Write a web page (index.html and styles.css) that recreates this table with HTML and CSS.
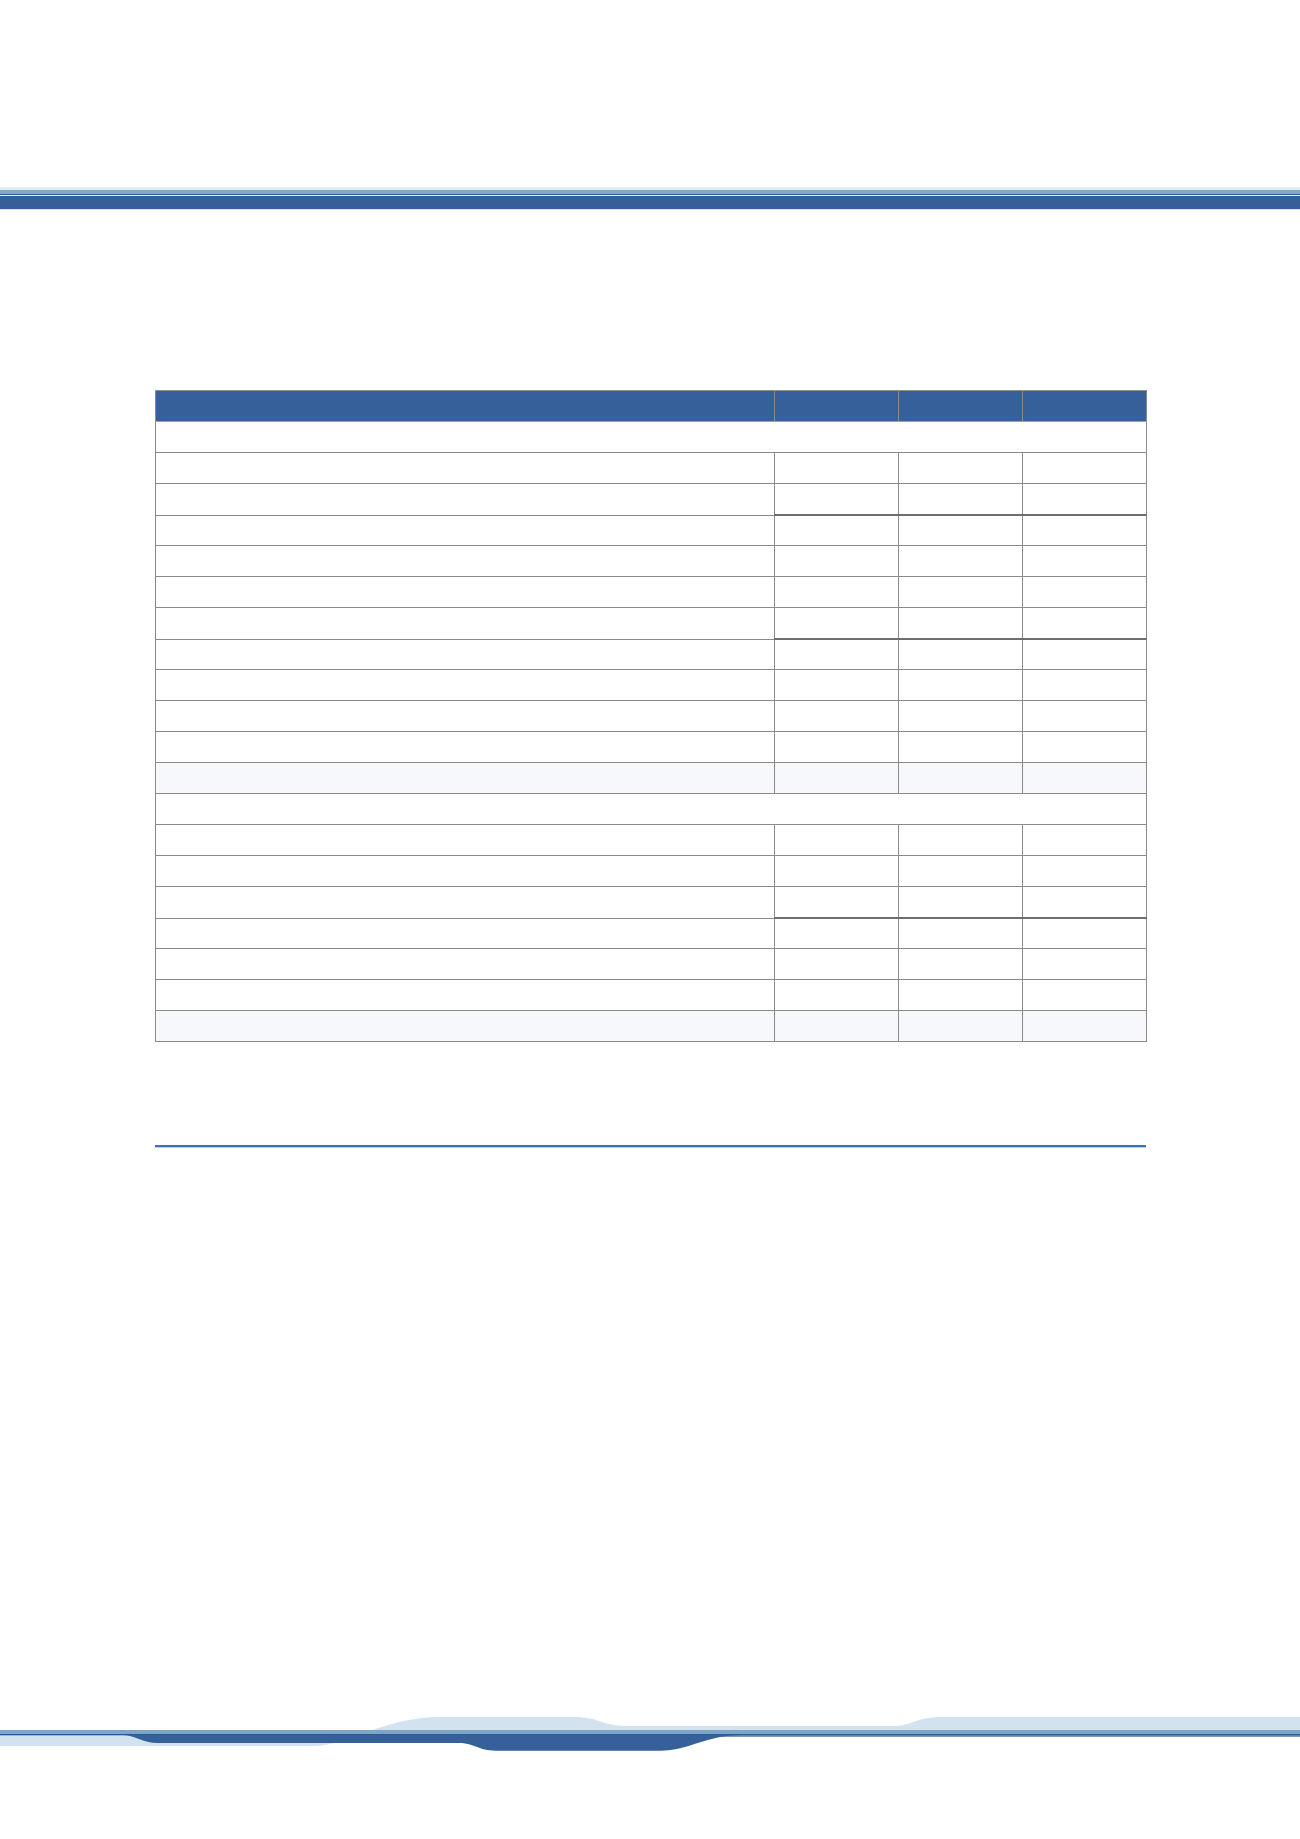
FILE: index.html
```html
<!DOCTYPE html>
<html lang="en">
<head>
<meta charset="utf-8">
<title>Report table</title>
<link rel="stylesheet" href="styles.css">
</head>
<body>
<div class="page">
  <header class="top-band">
    <div class="tb-light"></div>
    <div class="tb-mid"></div>
    <div class="tb-dark"></div>
    <div class="tb-gap"></div>
    <div class="tb-main"></div>
    <div class="tb-under"></div>
  </header>

  <main class="content">
    <table class="data">
      <colgroup>
        <col class="c-label"><col class="c-num"><col class="c-num"><col class="c-num">
      </colgroup>
      <thead>
        <tr><th></th><th class="num"></th><th class="num"></th><th class="num"></th></tr>
      </thead>
      <tbody>
        <tr class="section"><td colspan="4"></td></tr>
        <tr><td></td><td class="num"></td><td class="num"></td><td class="num"></td></tr>
        <tr><td></td><td class="num"></td><td class="num"></td><td class="num"></td></tr>
        <tr class="sep"><td></td><td class="num"></td><td class="num"></td><td class="num"></td></tr>
        <tr><td></td><td class="num"></td><td class="num"></td><td class="num"></td></tr>
        <tr><td></td><td class="num"></td><td class="num"></td><td class="num"></td></tr>
        <tr><td></td><td class="num"></td><td class="num"></td><td class="num"></td></tr>
        <tr class="sep"><td></td><td class="num"></td><td class="num"></td><td class="num"></td></tr>
        <tr><td></td><td class="num"></td><td class="num"></td><td class="num"></td></tr>
        <tr><td></td><td class="num"></td><td class="num"></td><td class="num"></td></tr>
        <tr><td></td><td class="num"></td><td class="num"></td><td class="num"></td></tr>
        <tr class="total"><td></td><td class="num"></td><td class="num"></td><td class="num"></td></tr>
        <tr class="section"><td colspan="4"></td></tr>
        <tr><td></td><td class="num"></td><td class="num"></td><td class="num"></td></tr>
        <tr><td></td><td class="num"></td><td class="num"></td><td class="num"></td></tr>
        <tr><td></td><td class="num"></td><td class="num"></td><td class="num"></td></tr>
        <tr class="sep"><td></td><td class="num"></td><td class="num"></td><td class="num"></td></tr>
        <tr><td></td><td class="num"></td><td class="num"></td><td class="num"></td></tr>
        <tr><td></td><td class="num"></td><td class="num"></td><td class="num"></td></tr>
        <tr class="total"><td></td><td class="num"></td><td class="num"></td><td class="num"></td></tr>
      </tbody>
    </table>

    <div class="rule"></div>
  </main>

  <footer class="bottom-band">
    <svg class="wave" width="1300" height="42" viewBox="0 0 1300 42" aria-hidden="true">
      <path fill="#d2e3ef" d="M0,17 L0,33 L315,33 C345,33 385,4 440,4 L575,4 C598,4 602,13 628,13 L893,13 C912,13 916,4 942,4 L1300,4 L1300,17 Z"/>
      <rect x="0" y="17" width="1300" height="4" fill="#7ca6c8"/>
      <rect x="0" y="21" width="1300" height="1.3" fill="#2b5a93"/>
      <rect x="600" y="22" width="700" height="1.8" fill="#5b83b5"/>
      <path fill="#35609a" d="M122,22 C135,22 142,30 158,30 L458,30 C475,30 478,37.7 496,37.7 L660,37.7 C690,37.7 705,22 742,22 Z"/>
    </svg>
  </footer>
</div>
</body>
</html>
```

FILE: styles.css
```css
html, body {
  margin: 0;
  padding: 0;
  background: #ffffff;
  font-family: "Liberation Sans", Arial, sans-serif;
}

.page {
  width: 1300px;
  height: 1839px;
  display: flex;
  flex-direction: column;
  overflow: hidden;
}

/* Top decorative band */
.top-band {
  margin-top: 187px;
  display: flex;
  flex-direction: column;
}
.tb-light { height: 3px; background: #e2ecf5; }
.tb-mid   { height: 4px; background: #7ea9c9; }
.tb-dark  { height: 1px; background: #2d5d96; }
.tb-gap   { height: 1px; background: #e8eff7; }
.tb-main  { height: 13px; background: #345f9a; }
.tb-under { height: 1px; background: #d6e2ee; }

/* Content */
.content {
  padding: 180px 154px 0 155px;
  display: flex;
  flex-direction: column;
}

.data {
  width: 991px;
  border-collapse: collapse;
  table-layout: fixed;
  border: 1px solid #9a9a9a;
}
.c-label { width: 619px; }
.c-num { width: 124px; }

.data th,
.data td {
  padding: 0;
  height: 30px;
  border: 1px solid #8a8a8a;
}

.data thead th {
  background: #35609a;
  border-top: 1px solid #8f8f8f;
  border-bottom: 1px solid #a0a0a0;
}
.data thead th.num {
  border-left: 1px solid #dfe7f1;
}

.data tbody td.num {
  border-left: 1px solid #777777;
}

.data tbody tr.section td {
  background: #ffffff;
}

.data tbody tr.sep td {
  height: 29px;
}
.data tbody tr.sep td.num {
  border-top: 2px solid #6e6e6e;
}

.data tbody tr.total td {
  background: #f6f8fc;
  border-top: 1px solid #777777;
}

.rule {
  margin-top: 103px;
  width: 991px;
  height: 2px;
  background: #3e73b3;
  border-bottom: 1px solid #bcd0e5;
}

/* Bottom decorative band */
.bottom-band {
  margin-top: auto;
  margin-bottom: 84px;
  height: 42px;
}
.wave {
  display: block;
}
```
